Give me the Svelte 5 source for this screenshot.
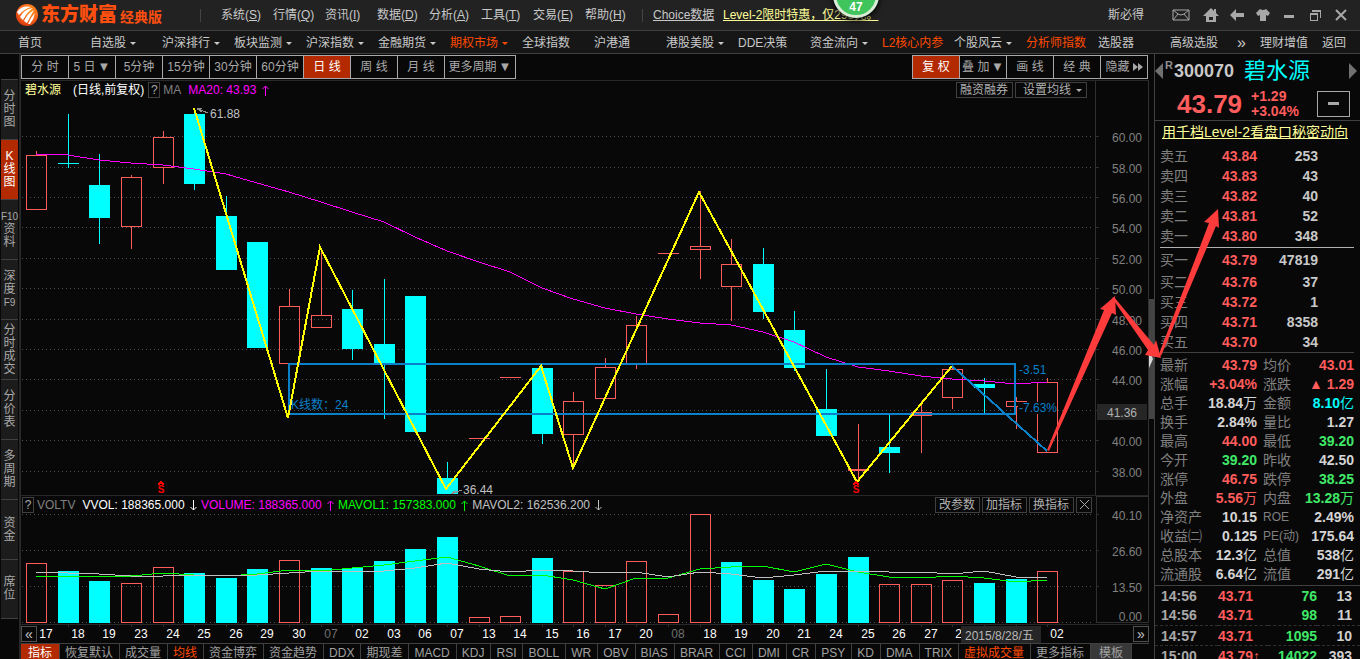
<script>
  const menus = [
    ['系统', 'S'], ['行情', 'Q'], ['资讯', 'I'], ['数据', 'D'],
    ['分析', 'A'], ['工具', 'T'], ['交易', 'E'], ['帮助', 'H'],
  ];

  const navItems = [
    { name: '首页' },
    { name: '自选股', more: true },
    { name: '沪深排行', more: true },
    { name: '板块监测', more: true },
    { name: '沪深指数', more: true },
    { name: '金融期货', more: true },
    { name: '期权市场', more: true, hot: true },
    { name: '全球指数' },
    { name: '沪港通' },
    { name: '港股美股', more: true },
    { name: 'DDE决策' },
    { name: '资金流向', more: true },
    { name: 'L2核心内参', hot: true },
    { name: '个股风云', more: true },
    { name: '分析师指数', hot: true },
    { name: '选股器' },
    { name: '高级选股' },
  ];

  const sideTabs = [
    ['分', '时', '图'], ['K', '线', '图'], ['F10', '资', '料'], ['深', '度', 'F9'],
    ['分', '时', '成', '交'], ['分', '价', '表'], ['多', '周', '期'], ['资', '金'], ['席', '位'],
  ];
  let activeSide = $state(1);

  const periods = ['分 时', '5 日', '5分钟', '15分钟', '30分钟', '60分钟', '日 线', '周 线', '月 线'];
  let period = $state('日 线');

  // up, body top, body bottom, high, low, volume top, volume up
  const candles = [
    [1, 155, 209, 151, 209, 563, 1],
    [0, 163, 163, 114, 167, 571, 0],
    [0, 185, 217, 154, 243, 581, 0],
    [1, 177, 226, 175, 248, 583, 1],
    [1, 137, 167, 131, 183, 567, 1],
    [0, 114, 183, 108, 189, 573, 0],
    [0, 216, 269, 196, 269, 578, 0],
    [0, 242, 347, 242, 347, 569, 0],
    [1, 306, 363, 289, 414, 560, 1],
    [1, 315, 327, 250, 327, 568, 0],
    [0, 309, 348, 290, 359, 568, 0],
    [0, 344, 363, 279, 418, 561, 0],
    [0, 296, 431, 296, 431, 549, 0],
    [0, 478, 493, 462, 493, 537, 0],
    [1, 438, 438, 438, 438, 617, 1],
    [1, 377, 377, 377, 377, 616, 1],
    [0, 368, 433, 366, 443, 558, 0],
    [1, 401, 434, 392, 464, 571, 1],
    [1, 367, 398, 358, 398, 585, 1],
    [1, 325, 363, 316, 368, 561, 1],
    [1, 253, 253, 253, 253, 614, 1],
    [1, 246, 249, 191, 278, 514, 1],
    [1, 264, 286, 239, 320, 562, 0],
    [0, 264, 311, 248, 318, 580, 0],
    [0, 330, 367, 311, 370, 589, 0],
    [0, 409, 435, 369, 435, 574, 0],
    [1, 469, 470, 424, 480, 557, 0],
    [0, 447, 452, 414, 472, 584, 1],
    [1, 412, 415, 401, 452, 584, 1],
    [1, 369, 397, 365, 408, 580, 1],
    [0, 384, 387, 378, 413, 583, 0],
    [1, 401, 406, 397, 428, 579, 0],
    [1, 382, 452, 378, 452, 571, 1],
  ];
  const cx = (i) => Math.round(36.2 + i * 31.594);

  const ma20 = [154, 155, 160, 163, 165, 169, 174, 183, 192, 202, 212, 222, 237, 251, 262, 272, 288, 299, 308,
    314, 319, 323, 325, 332, 342, 357, 367, 371, 376, 379, 381, 384, 382];
  const mavol1 = [576, 576, 576, 576, 573, 575, 576, 574, 570, 571, 568, 565, 561, 557, 566, 576, 575, 580, 589,
    578, 578, 569, 567, 566, 572, 564, 572, 577, 578, 576, 578, 582, 580];
  const mavol2 = [572, 573, 574, 576, 576, 575, 576, 575, 573, 571, 572, 571, 568, 563, 569, 572, 570, 571, 573,
    572, 577, 572, 574, 578, 575, 571, 571, 572, 572, 574, 571, 577, 578];
  const line = (ys) => ys.map((y, i) => `${cx(i)},${y}`).join(' ');

  const priceGrid = [
    [136, '60.00'], [167, '58.00'], [197, '56.00'], [227, '54.00'], [258, '52.00'], [288, '50.00'],
    [319, '48.00'], [349, '46.00'], [379, '44.00'], [410, ''], [440, '40.00'], [471, '38.00'],
  ];
  const volGrid = [[514, '40.10'], [550, '26.60'], [586, '13.50'], [622, '']];

  const dates = ['17', '18', '19', '23', '24', '25', '26', '29', '30', '07', '02', '03', '06', '07', '13', '14', '15',
    '16', '17', '20', '08', '18', '19', '20', '21', '24', '25', '26', '27', '28', '', '', '02'];

  const indicators = ['指标', '恢复默认', '成交量', '均线', '资金博弈', '资金趋势', 'DDX', '期现差', 'MACD', 'KDJ', 'RSI',
    'BOLL', 'WR', 'OBV', 'BIAS', 'BRAR', 'CCI', 'DMI', 'CR', 'PSY', 'KD', 'DMA', 'TRIX', '虚拟成交量', '更多指标', '模板'];
  let indicator = $state('指标');

  const asks = [['卖五', '43.84', 253], ['卖四', '43.83', 43], ['卖三', '43.82', 40], ['卖二', '43.81', 52], ['卖一', '43.80', 348]];
  const bids = [['买一', '43.79', 47819], ['买二', '43.76', 37], ['买三', '43.72', 1], ['买四', '43.71', 8358], ['买五', '43.70', 34]];

  const stats = [
    ['最新', '43.79', '', 'red', '均价', '43.01', '', 'red'],
    ['涨幅', '+3.04%', '', 'red', '涨跌', '▲ 1.29', '', 'red'],
    ['总手', '18.84', '万', 'plain', '金额', '8.10', '亿', 'cyan'],
    ['换手', '2.84%', '', 'plain', '量比', '1.27', '', 'plain'],
    ['最高', '44.00', '', 'red', '最低', '39.20', '', 'green'],
    ['今开', '39.20', '', 'green', '昨收', '42.50', '', 'plain'],
    ['涨停', '46.75', '', 'red', '跌停', '38.25', '', 'green'],
    ['外盘', '5.56', '万', 'red', '内盘', '13.28', '万', 'green'],
    ['净资产', '10.15', '', 'plain', 'ROE', '2.49%', '', 'plain'],
    ['收益㈡', '0.125', '', 'plain', 'PE(动)', '175.64', '', 'plain'],
    ['总股本', '12.3', '亿', 'plain', '总值', '538', '亿', 'plain'],
    ['流通股', '6.64', '亿', 'plain', '流值', '291', '亿', 'plain'],
  ];

  const ticks = [
    ['14:56', '43.71', '', 76, 13],
    ['14:56', '43.71', '', 98, 11],
    ['14:57', '43.71', '', 1095, 10],
    ['15:00', '43.79', '↑', 14022, 393],
  ];
</script>

{#snippet trend(up)}
  <svg class="trend" width="7" height="11" viewBox="0 0 7 11" role="img" aria-label={up ? '上升' : '下降'}>
    <path d={up ? 'M3.5 11V1M0.5 4L3.5 1L6.5 4' : 'M3.5 0V10M0.5 7L3.5 10L6.5 7'} />
  </svg>
{/snippet}

<div class="app">
  <header class="titlebar">
    <div class="logo">
      <svg width="24" height="24" viewBox="0 0 24 24" aria-hidden="true">
        <defs>
          <radialGradient id="ball" cx="0.6" cy="0.3" r="0.8">
            <stop offset="0" stop-color="#ff9a1c" />
            <stop offset="0.6" stop-color="#f8601a" />
            <stop offset="1" stop-color="#c62a08" />
          </radialGradient>
        </defs>
        <circle cx="12" cy="12" r="11" fill="url(#ball)" />
        <path d="M2 9Q7 2 16 4Q9 6 4 12Z" fill="#fff" />
        <path d="M5 14Q9 6 18 5Q12 9 8 17Z" fill="#fff" />
        <path d="M9 18Q12 11 19 7Q16 12 12 20Z" fill="#fff" />
        <path d="M13 21Q15 15 20 10Q19 16 15 21Z" fill="#fff" />
      </svg>
      <strong>东方财富</strong>
      <small>经典版</small>
    </div>
    <span class="sep"></span>
    <nav class="menus">
      {#each menus as [name, key]}
        <button>{name}(<u>{key}</u>)</button>
      {/each}
    </nav>
    <span class="sep short"></span>
    <a class="choice" href="#choice">Choice数据</a>
    <a class="promo" href="#level2">Level-2限时特惠，仅298元。</a>
    <span class="user">斯必得</span>
    <div class="window-tools">
      <button class="mail" aria-label="邮件">
        <svg width="18" height="12" viewBox="0 0 18 12"><path d="M1 1H17V11H1ZM1 1L6 5Q9 7 12 5L17 1M1 11L6 5M17 11L12 5" /></svg>
      </button>
      <button aria-label="主页">
        <svg width="16" height="14" viewBox="0 0 16 14"><path class="solid" d="M8 0L11 3V1H13V5L16 8H13V14H3V8H0ZM6 9V12H10V9Z" fill-rule="evenodd" /></svg>
      </button>
      <button aria-label="后退">
        <svg width="14" height="12" viewBox="0 0 14 12"><path class="solid" d="M0 6L6 0V4H14V8H6V12Z" /></svg>
      </button>
      <button aria-label="皮肤">
        <svg width="14" height="12" viewBox="0 0 14 12"><path class="solid" d="M4 0Q7 2 10 0L14 4L12 7L10 6V12H4V6L2 7L0 4Z" /></svg>
      </button>
      <button aria-label="最小化">
        <svg width="12" height="12" viewBox="0 0 12 12"><path class="solid" d="M1 6H11V9H1Z" /></svg>
      </button>
      <button aria-label="还原">
        <svg width="12" height="12" viewBox="0 0 12 12"><path class="crisp" d="M1.5 4.5H8.5V11.5H1.5ZM1 5.5H9M3 1.5H11.5V9M3 2.5H11" /></svg>
      </button>
      <button aria-label="关闭">
        <svg width="12" height="12" viewBox="0 0 12 12"><path class="thick" d="M1 1L11 11M11 1L1 11" /></svg>
      </button>
    </div>
    <span class="bubble">47</span>
  </header>

  <nav class="navbar">
    <div class="nav-list">
      {#each navItems as item}
        <a href="#nav" class:hot={item.hot}>{item.name}{#if item.more}<i class="caret"></i>{/if}</a>
      {/each}
    </div>
    <a class="chevrons" href="#more">»</a>
    <a href="#wealth">理财增值</a>
    <a href="#back">返回</a>
  </nav>

  <div class="body">
    <aside class="sidebar">
      {#each sideTabs as tab, i}
        <button class:active={activeSide === i} onclick={() => (activeSide = i)}>
          {#each tab as word}<span class:latin={word.length > 1}>{word}</span>{/each}
        </button>
      {/each}
    </aside>

    <main>
      <div class="toolbar">
        <div class="cells">
          {#each periods as p}
            {#if p === '5 日'}
              <label class="cell"><select aria-label="多日分时"><option>5 日</option></select><span>▼</span></label>
            {:else}
              <button class="cell" class:active={period === p} onclick={() => (period = p)}>{p}</button>
            {/if}
          {/each}
          <label class="cell wide"><select aria-label="更多周期"><option>更多周期</option></select><span>▼</span></label>
        </div>
        <div class="cells">
          <button class="cell active">复 权</button>
          <label class="cell"><select aria-label="叠加"><option>叠 加</option></select><span>▼</span></label>
          <button class="cell">画 线</button>
          <button class="cell">经 典</button>
          <button class="cell">隐藏<svg class="ff" width="10" height="8" viewBox="0 0 10 8"><path d="M0 0L5 4L0 8ZM5 0L10 4L5 8Z" /></svg></button>
        </div>
      </div>

      <section class="plot price">
        <svg class="chart" viewBox="21 81 1128 414">
          <g class="grid">
            {#each priceGrid as [y]}
              <path class="dots" d="M22 {y}.5H1092" />
              <path class="tick" d="M1096 {y}.5H1099" />
            {/each}
            <path class="frame" d="M1095.5 81V495M1148.5 81V495" />
          </g>
          {#each candles as [up, top, bottom, high, low], i}
            <g class={up ? 'up' : 'down'}>
              <path d="M{cx(i)}.5 {high}V{top}M{cx(i)}.5 {bottom}V{low + 1}" />
              {#if top === bottom}
                <path d="M{cx(i) - 10} {top}.5H{cx(i) + 11}" />
              {:else}
                <rect x={cx(i) - 9.5} y={top + 0.5} width="20" height={bottom - top} />
              {/if}
            </g>
          {/each}
          <polyline class="ma" points={line(ma20)} />
          <path class="range" d="M289 364H1015V414H289Z" />
          <rect class="mask" x="1018" y="402" width="38" height="12" />
          <polyline class="zigzag" points="194,108 288,418 320,247 446,489 541,366 573,468 699,192 857,482 952,366" />
          <path class="range" d="M952 366L1047 451" />
          <path class="pointer" d="M208 113L198 109M202 108L197 109L202 112M462 490L451 494M456 490L451 494" />
          <text class="note" x="210" y="118">61.88</text>
          <text class="note" x="463" y="494">36.44</text>
          <text class="blue" x="291" y="409">K线数：24</text>
          <text class="blue" x="1019" y="374">-3.51</text>
          <text class="blue" x="1019" y="412">-7.63%</text>
          {#each [161, 856] as x}
            <text class="mark" {x} y="493" text-anchor="middle">S</text>
            <path class="hat" d="M{x - 3} 485L{x} 482L{x + 3} 485" />
          {/each}
          {#each priceGrid as [y, label]}
            <text class="axis" x="1142" y={y + 6} text-anchor="end">{label}</text>
          {/each}
          <rect class="cursor" x="1097" y="404" width="50" height="16" />
          <text class="axis lit" x="1137" y="417" text-anchor="end">41.36</text>
        </svg>
        <div class="plot-head">
          <span class="stock">碧水源</span>
          <span class="white">(日线,前复权)</span>
          <button class="help">?</button>
          <span class="dim">MA</span>
          <span class="magenta">MA20: 43.93 {@render trend(true)}</span>
          <div class="head-tools">
            <button>融资融券</button>
            <label><select aria-label="设置均线"><option>设置均线</option></select><i class="caret"></i></label>
          </div>
        </div>
      </section>

      <section class="plot volume">
        <svg class="chart" viewBox="21 496 1128 128">
          <g class="grid">
            {#each volGrid as [y, label]}
              <path class="dots" d="M22 {y}.5H1092" />
              <path class="tick" d="M1096 {y}.5H1099" />
              <text class="axis" x="1142" y={y + 6} text-anchor="end">{label}</text>
            {/each}
            <text class="axis" x="1142" y="621" text-anchor="end">0.00</text>
            <path class="frame" d="M1096.5 496.5H1148.5V622.5H1096.5Z" />
          </g>
          {#each candles as c, i}
            <g class={c[6] ? 'up' : 'down'}>
              <rect x={cx(i) - 9.5} y={c[5] + 0.5} width="20" height={622 - c[5]} />
            </g>
          {/each}
          <polyline class="mavol1" points={line(mavol1)} />
          <polyline class="mavol2" points={line(mavol2)} />
        </svg>
        <div class="plot-head">
          <button class="help">?</button>
          <span class="dim">VOLTV</span>
          <span class="white">VVOL: 188365.000 {@render trend(false)}</span>
          <span class="magenta">VOLUME: 188365.000 {@render trend(true)}</span>
          <span class="lime">MAVOL1: 157383.000 {@render trend(true)}</span>
          <span class="silver">MAVOL2: 162536.200 {@render trend(false)}</span>
          <div class="head-tools">
            <button>改参数</button>
            <button>加指标</button>
            <button>换指标</button>
            <button class="close" aria-label="关闭"><svg width="9" height="9" viewBox="0 0 9 9"><path d="M0 0L9 9M9 0L0 9" /></svg></button>
          </div>
        </div>
      </section>

      <div class="dates">
        <button>«</button>
        <svg viewBox="37 625 1096 18">
          {#each dates as d, i}
            <path class="tick" d="M{cx(i)}.5 625V627" />
            <text class:month={i === 9 || i === 20} x={cx(i) + 10} y="638" text-anchor="middle">{d}</text>
          {/each}
          <rect class="cursor" x="961" y="626" width="80" height="17" />
          <text class="day" x="965" y="640">2015/8/28/五</text>
        </svg>
        <button>»</button>
      </div>

      <div class="indicators">
        {#each indicators as name}
          <button
            class:active={indicator === name}
            class:hot={name === '均线' || name === '虚拟成交量'}
            class:template={name === '模板'}
            onclick={() => (indicator = name)}>{name}</button>
        {/each}
      </div>
    </main>

    <div class="scroller">
      <div class="thumb"><svg width="4" height="18" viewBox="0 0 4 18"><path d="M0 0L4 9L0 18Z" /></svg></div>
    </div>

    <aside class="quote">
      <div class="quote-name">
        <button aria-label="上一只"><svg width="8" height="16" viewBox="0 0 8 16"><path d="M8 0V16L0 8Z" /></svg></button>
        <sup>R</sup>
        <b>300070</b>
        <span>碧水源</span>
        <button aria-label="下一只"><svg width="8" height="16" viewBox="0 0 8 16"><path d="M0 0V16L8 8Z" /></svg></button>
      </div>
      <div class="quote-price">
        <strong>43.79</strong>
        <div><span>+1.29</span><span>+3.04%</span></div>
        <button aria-label="收起"><i></i></button>
      </div>
      <a class="level2" href="#level2">用千档Level-2看盘口秘密动向</a>
      <table class="book">
        <tbody>
          {#each asks as [name, price, vol]}
            <tr><th>{name}</th><td class="red">{price}</td><td>{vol}</td></tr>
          {/each}
        </tbody>
      </table>
      <table class="book bids">
        <tbody>
          {#each bids as [name, price, vol]}
            <tr><th>{name}</th><td class="red">{price}</td><td>{vol}</td></tr>
          {/each}
        </tbody>
      </table>
      <table class="stats">
        <tbody>
          {#each stats as [a, av, au, ac, b, bv, bu, bc]}
            <tr>
              <th>{a}</th><td class={ac}>{av}<em>{au}</em></td>
              <th class="second" class:code={b === 'ROE' || b === 'PE(动)'}>{b}</th><td class={bc}>{bv}<em>{bu}</em></td>
            </tr>
          {/each}
        </tbody>
      </table>
      <table class="ticks">
        <tbody>
          {#each ticks as [time, price, arrow, vol, count]}
            <tr><td>{time}</td><td class="red">{price}{arrow}</td><td class="green">{vol}</td><td>{count}</td></tr>
          {/each}
        </tbody>
      </table>
    </aside>
  </div>

  <svg class="arrows" width="180" height="252" viewBox="1044 204 180 252">
    <path d="M1047 450L1104 310L1100 309L1115 296L1116 315L1112 313L1049 451Z" />
    <path d="M1112 298L1148 350L1145 355L1161 358L1156 340L1154 345L1114 297Z" />
    <path d="M1159 354L1209 223L1204 222L1218 209L1219 228L1216 226L1161 356Z" />
  </svg>
</div>

<style>
  :global(body) {
    background: #080808;
    overflow: hidden;
  }

  .app {
    position: relative;
    height: 100vh;
    overflow: hidden;
    display: flex;
    flex-direction: column;
    background: #080808;
    color: #c8c8c8;
    font: 12px/16px 'Liberation Sans', 'Noto Sans CJK SC', sans-serif;
  }

  button,
  select {
    appearance: none;
    background: none;
    border: 0;
    border-radius: 0;
    padding: 0;
    margin: 0;
    color: inherit;
    font: inherit;
    white-space: nowrap;
    cursor: pointer;
  }
  a {
    color: inherit;
    text-decoration: none;
    white-space: nowrap;
  }

  .red { color: #ff5c5c; }
  .green { color: #40e868; }
  .cyan { color: #00ffff; }
  .plain { color: #d4d4d4; }
  .white { color: #ffffff; }
  .magenta { color: #ff00ff; }
  .lime { color: #00ff00; }
  .silver { color: #c0c0c0; }
  .dim { color: #808080; }

  .caret {
    display: inline-block;
    margin-left: 4px;
    vertical-align: 2px;
    border: 3px solid transparent;
    border-top-color: currentColor;
    border-bottom: 0;
  }

  /* title bar */
  .titlebar {
    position: relative;
    display: flex;
    align-items: center;
    height: 30px;
    flex: none;
    background: #222222;
    border-bottom: 1px solid #404040;
  }
  .logo {
    display: flex;
    align-items: center;
    width: 185px;
    padding-left: 15px;
    color: #ff4f10;
    white-space: nowrap;
  }
  .logo strong {
    margin-left: 2px;
    font-size: 19px;
    font-weight: 900;
  }
  .logo small {
    margin: 4px 0 0 3px;
    font-size: 14px;
    font-weight: 700;
  }
  .sep {
    width: 1px;
    height: 13px;
    background: #444444;
    margin-right: 20px;
  }
  .sep.short {
    margin: 0 10px 0 0;
  }
  .menus {
    display: flex;
    width: 421px;
  }
  .menus button {
    width: 52px;
    text-align: left;
  }
  .choice {
    width: 70px;
    text-decoration: underline;
  }
  .promo {
    color: #ffff99;
    text-decoration: underline;
  }
  .user {
    margin-left: auto;
    margin-right: 20px;
  }
  .window-tools {
    display: flex;
    padding-right: 6px;
  }
  .window-tools button {
    width: 26px;
    height: 26px;
    display: grid;
    place-items: center;
  }
  .window-tools .mail {
    width: 34px;
  }
  .window-tools path {
    fill: none;
    stroke: #a8a8a8;
  }
  .window-tools .solid {
    fill: #a8a8a8;
    stroke: none;
  }
  .window-tools .thick {
    stroke-width: 2;
  }
  .window-tools .crisp {
    shape-rendering: crispEdges;
  }
  .bubble {
    position: absolute;
    left: 833px;
    top: -28px;
    width: 40px;
    height: 40px;
    border: 3px solid #d8ecd8;
    border-radius: 50%;
    background: #40c45c;
    box-shadow: 0 2px 6px #000000;
    color: #ffffff;
    font-weight: 700;
    line-height: 64px;
    text-align: center;
  }

  /* navigation */
  .navbar {
    display: flex;
    align-items: center;
    flex: none;
    height: 20px;
    gap: 14px;
    padding: 2px 14px 0 18px;
    background: #161616;
    border-bottom: 1px solid #404040;
  }
  .nav-list {
    display: flex;
    flex: 1;
  }
  .nav-list a {
    width: 72px;
  }
  .nav-list a:last-child {
    width: 48px;
  }
  .chevrons {
    font-size: 16px;
  }
  .hot {
    color: #ff4a00;
  }

  .body {
    display: flex;
    flex: 1;
    min-height: 0;
  }

  /* left tabs */
  .sidebar {
    width: 18px;
    flex: none;
    padding: 25px 0 0 1px;
    border-right: 2px solid #282828;
  }
  .sidebar button {
    display: flex;
    flex-direction: column;
    align-items: center;
    justify-content: center;
    width: 17px;
    height: 60px;
    background: #1c1c1c;
    border: solid #404040;
    border-width: 1px 0 0;
    color: #a8a8a8;
    line-height: 13px;
  }
  .sidebar button:last-child {
    border-bottom-width: 1px;
  }
  .sidebar .active {
    background: #b42a00;
    color: #ffffff;
  }
  .sidebar .latin {
    font-size: 10px;
  }

  main {
    flex: 1;
    min-width: 0;
  }

  .toolbar {
    display: flex;
    justify-content: space-between;
    padding: 1px 1px 1px 0;
    border-bottom: 1px solid #282828;
  }
  .cells {
    display: flex;
    border: solid #a8a8a8;
    border-width: 1px 0 1px 1px;
  }
  .cell {
    display: flex;
    align-items: center;
    justify-content: center;
    box-sizing: border-box;
    width: 47px;
    height: 22px;
    border-right: 1px solid #a8a8a8;
    color: #a8a8a8;
  }
  .cell.wide {
    width: 71px;
  }
  .cell.active {
    background: #b42a00;
    color: #ffffff;
  }
  .cell span {
    margin-left: 1px;
    font-size: 13px;
  }
  .ff {
    margin-left: 3px;
    fill: #a8a8a8;
  }

  /* charts */
  .plot {
    position: relative;
  }
  .plot.price {
    border-bottom: 1px solid #282828;
  }
  .chart {
    display: block;
    width: 100%;
  }
  .chart path,
  .chart rect,
  .chart polyline {
    fill: none;
    shape-rendering: crispEdges;
  }
  .chart .dots {
    stroke: #505050;
    stroke-dasharray: 1 3;
  }
  .chart .frame,
  .chart .tick,
  .dates .tick {
    stroke: #303030;
  }
  .up path,
  .up rect {
    stroke: #ff5c5c;
  }
  .down path,
  .down rect {
    stroke: #00ffff;
  }
  .chart .down rect {
    fill: #00ffff;
  }
  .ma { stroke: #ff00ff; }
  .mavol1 { stroke: #00ff00; }
  .mavol2 { stroke: #c0c0c0; }
  .zigzag {
    stroke: #ffff00;
    stroke-width: 2;
  }
  .range {
    stroke: #0a80c8;
    stroke-width: 2;
  }
  .chart .mask {
    fill: #080808;
  }
  .pointer {
    stroke: #909090;
  }
  .chart .hat {
    stroke: #ff0000;
    stroke-width: 2;
  }
  .note { fill: #c0c0c0; }
  .blue { fill: #0a80c8; }
  .mark {
    fill: #ff0000;
    font-size: 10px;
    font-weight: 700;
  }
  .axis {
    fill: #808080;
  }
  .axis.lit {
    fill: #b0b0b0;
  }
  .chart .cursor,
  .dates .cursor {
    fill: #262626;
  }

  .plot-head {
    position: absolute;
    top: 1px;
    left: 1px;
    right: 57px;
    display: flex;
    align-items: center;
    gap: 4px;
    height: 16px;
    white-space: nowrap;
  }
  .price .plot-head {
    right: 62px;
    left: 4px;
  }
  .stock {
    width: 44px;
    color: #ffff99;
  }
  .plot-head .dim {
    margin-right: 3px;
    margin-left: -1px;
  }
  .trend {
    margin-left: 2px;
    vertical-align: -2px;
    fill: none;
    stroke: currentColor;
  }
  .help {
    width: 12px;
    height: 16px;
    border: 1px solid #404040;
    color: #a8a8a8;
    line-height: 14px;
  }
  .head-tools {
    display: flex;
    gap: 2px;
    margin-left: auto;
  }
  .head-tools button,
  .head-tools label {
    box-sizing: border-box;
    height: 16px;
    padding: 0 4px 0 3px;
    border: 1px solid #404040;
    color: #b0b0b0;
    line-height: 14px;
  }
  .head-tools label {
    width: 72px;
    padding-left: 7px;
  }
  .head-tools .close {
    width: 16px;
    padding: 0;
  }
  .close path {
    stroke: #a8a8a8;
  }

  .dates {
    display: flex;
    height: 18px;
    border-top: 1px solid #282828;
    border-bottom: 1px solid #404040;
  }
  .dates button {
    box-sizing: border-box;
    width: 16px;
    height: 16px;
    margin-top: 1px;
    border: 1px solid #505050;
    font-size: 14px;
    line-height: 12px;
  }
  .dates svg {
    display: block;
    flex: 1;
    min-width: 0;
  }
  .dates text {
    fill: #ffffff;
  }
  .dates .month {
    fill: #707070;
  }
  .dates .day {
    fill: #b8b8b8;
  }

  .indicators {
    display: flex;
    height: 18px;
    overflow: hidden;
  }
  .indicators button {
    flex: none;
    padding: 0 6px 0 5px;
    border-right: 1px solid #404040;
    color: #a0a0a0;
  }
  .indicators .hot {
    color: #ff4a00;
  }
  .indicators .active {
    padding: 0 7px;
    background: #b42a00;
    color: #ffffff;
  }
  .indicators .template {
    padding: 0 8px;
    background: #383838;
  }

  .scroller {
    flex: none;
    width: 5px;
    padding-top: 245px;
    border-right: 1px solid #404040;
  }
  .thumb {
    display: flex;
    align-items: center;
    height: 120px;
    background: #444444;
  }
  .thumb path {
    fill: #d8d8d8;
  }

  /* quote panel */
  .quote {
    flex: none;
    width: 205px;
    font-size: 14px;
    font-weight: 700;
  }
  .quote-name {
    display: flex;
    align-items: center;
    height: 33px;
    padding-right: 3px;
  }
  .quote-name button {
    display: flex;
    fill: #707070;
  }
  .quote-name button:last-child {
    margin-left: auto;
  }
  .quote-name sup {
    margin: 0 1px 12px 2px;
    color: #909090;
    font-size: 11px;
    line-height: 12px;
  }
  .quote-name b {
    font-size: 18px;
    font-weight: 700;
  }
  .quote-name span {
    margin-left: 10px;
    color: #00ffff;
    font-size: 22px;
    font-weight: 400;
  }
  .quote-price {
    display: flex;
    align-items: center;
    height: 33px;
    padding: 0 10px 0 22px;
    border-bottom: 1px solid #404040;
    color: #ff5c5c;
  }
  .quote-price strong {
    width: 74px;
    font-size: 26px;
  }
  .quote-price div {
    display: flex;
    flex-direction: column;
    line-height: 15px;
  }
  .quote-price button {
    display: grid;
    place-items: center;
    width: 33px;
    height: 26px;
    margin-left: auto;
    border: 1px solid #a8a8a8;
  }
  .quote-price i {
    width: 11px;
    height: 3px;
    background: #a8a8a8;
  }
  .level2 {
    display: block;
    height: 25px;
    padding-left: 7px;
    color: #ffff99;
    font-weight: 400;
    line-height: 22px;
    text-decoration: underline;
  }

  table {
    width: 194px;
    margin-left: 5px;
    border-collapse: collapse;
    table-layout: fixed;
  }
  th {
    padding: 0;
    color: #808080;
    font-weight: 400;
    text-align: left;
    white-space: nowrap;
  }
  td {
    padding: 0;
    text-align: right;
    white-space: nowrap;
  }
  .book tr {
    height: 20px;
  }
  .book td:nth-child(2) {
    width: 70px;
  }
  .book th {
    width: 27px;
  }
  .book td:last-child {
    padding-right: 36px;
  }
  .book.bids {
    margin-top: 1px;
    border-top: 1px solid #b0b0b0;
    border-bottom: 1px solid #404040;
  }
  .book.bids tr:first-child {
    height: 24px;
  }
  .book.bids tr:last-child {
    height: 21px;
  }
  .stats {
    margin-top: 2px;
  }
  .stats tr {
    height: 19px;
  }
  .stats th {
    width: 42px;
  }
  .stats td {
    width: 55px;
  }
  .stats .second {
    width: 36px;
    padding-left: 6px;
  }
  .stats .code {
    font-size: 12px;
  }
  .stats em {
    font-style: normal;
    font-weight: 400;
  }
  .ticks {
    margin: 2px 0 0;
    width: 100%;
    border-top: 1px solid #404040;
    color: #d0d0d0;
  }
  .ticks tr {
    height: 20px;
  }
  .ticks tr + tr + tr {
    border-top: 1px dashed #303030;
  }
  .ticks td:first-child {
    width: 57px;
    padding-left: 6px;
    color: #a8a8a8;
    text-align: left;
  }
  .ticks td:nth-child(2) {
    text-align: left;
    width: 50px;
  }
  .ticks td:nth-child(3) {
    width: 49px;
  }
  .ticks td:last-child {
    padding-right: 8px;
  }

  .arrows {
    position: absolute;
    top: 204px;
    right: 136px;
    fill: #ff3b3b;
    pointer-events: none;
  }
</style>
